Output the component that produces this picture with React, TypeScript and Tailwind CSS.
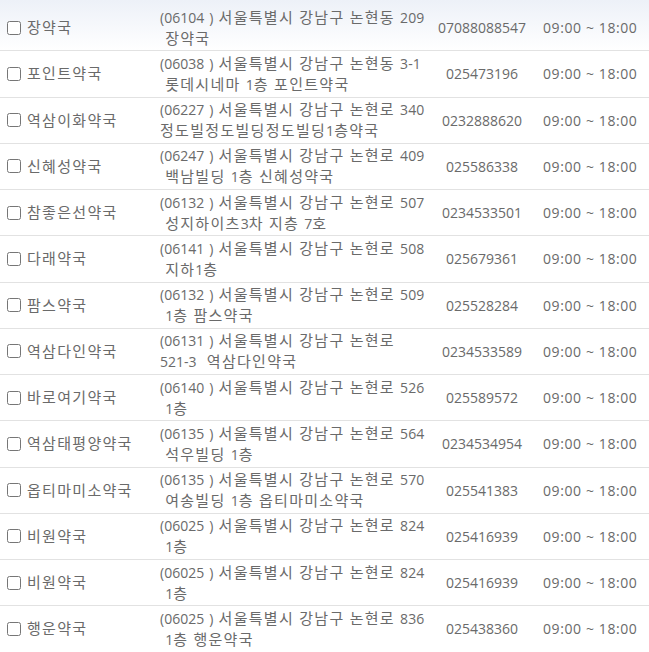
import React from "react";

type Pharmacy = {
  name: string;
  addr1: string;
  addr2: string;
  phone: string;
};

const rows: Pharmacy[] = [
  { name: "장약국", addr1: "(06104 ) 서울특별시 강남구 논현동 209", addr2: "\u00a0장약국", phone: "07088088547" },
  { name: "포인트약국", addr1: "(06038 ) 서울특별시 강남구 논현동 3-1", addr2: "\u00a0롯데시네마 1층 포인트약국", phone: "025473196" },
  { name: "역삼이화약국", addr1: "(06227 ) 서울특별시 강남구 논현로 340", addr2: "정도빌정도빌딩정도빌딩1층약국", phone: "0232888620" },
  { name: "신혜성약국", addr1: "(06247 ) 서울특별시 강남구 논현로 409", addr2: "\u00a0백남빌딩 1층 신혜성약국", phone: "025586338" },
  { name: "참좋은선약국", addr1: "(06132 ) 서울특별시 강남구 논현로 507", addr2: "\u00a0성지하이츠3차 지층 7호", phone: "0234533501" },
  { name: "다래약국", addr1: "(06141 ) 서울특별시 강남구 논현로 508", addr2: "\u00a0지하1층", phone: "025679361" },
  { name: "팜스약국", addr1: "(06132 ) 서울특별시 강남구 논현로 509", addr2: "\u00a01층 팜스약국", phone: "025528284" },
  { name: "역삼다인약국", addr1: "(06131 ) 서울특별시 강남구 논현로", addr2: "521-3\u00a0\u00a0역삼다인약국", phone: "0234533589" },
  { name: "바로여기약국", addr1: "(06140 ) 서울특별시 강남구 논현로 526", addr2: "\u00a01층", phone: "025589572" },
  { name: "역삼태평양약국", addr1: "(06135 ) 서울특별시 강남구 논현로 564", addr2: "\u00a0석우빌딩 1층", phone: "0234534954" },
  { name: "옵티마미소약국", addr1: "(06135 ) 서울특별시 강남구 논현로 570", addr2: "\u00a0여송빌딩 1층 옵티마미소약국", phone: "025541383" },
  { name: "비원약국", addr1: "(06025 ) 서울특별시 강남구 논현로 824", addr2: "\u00a01층", phone: "025416939" },
  { name: "비원약국", addr1: "(06025 ) 서울특별시 강남구 논현로 824", addr2: "\u00a01층", phone: "025416939" },
  { name: "행운약국", addr1: "(06025 ) 서울특별시 강남구 논현로 836", addr2: "\u00a01층 행운약국", phone: "025438360" },
];

// Hangul in the original font runs wider than Noto CJK, so size those runs up a bit.
function Ko({ text }: { text: string }) {
  const parts = text.split(/([\uac00-\ud7a3]+)/);
  return (
    <>
      {parts.map((part, i) =>
        /[\uac00-\ud7a3]/.test(part) ? (
          <span key={i} className="text-[15px] tracking-[1.3px]">
            {part}
          </span>
        ) : (
          <React.Fragment key={i}>{part}</React.Fragment>
        )
      )}
    </>
  );
}

function Row({ p }: { p: Pharmacy }) {
  return (
    <div className="flex h-[46.25px] items-center border-b border-[#e2e2e2]">
      <label className="flex w-[160px] shrink-0 items-center gap-[6px] pl-[7px]">
        <input type="checkbox" className="h-[14px] w-[14px] shrink-0" />
        <span className="whitespace-nowrap leading-[21px]">
          <Ko text={p.name} />
        </span>
      </label>
      <div className="w-[272px] shrink-0 whitespace-nowrap leading-[21px] [word-spacing:1.5px]">
        <Ko text={p.addr1} />
        <br />
        <Ko text={p.addr2} />
      </div>
      <div className="w-[100px] shrink-0 text-center">{p.phone}</div>
      <div className="flex-1 whitespace-nowrap pl-[11px] tracking-[0.6px]">
        09:00 ~ 18:00
      </div>
    </div>
  );
}

export default function App() {
  return (
    <div
      className="h-[652px] w-[649px] overflow-hidden bg-white text-[14px] text-[#6a6a6a]"
      style={{ fontFamily: '"Open Sans", "Noto Sans CJK KR", sans-serif' }}
    >
      <div className="bg-gradient-to-b from-[#edf1f8] to-white pt-[5px]">
        <Row p={rows[0]} />
      </div>
      {rows.slice(1).map((p, i) => (
        <Row key={i} p={p} />
      ))}
    </div>
  );
}
